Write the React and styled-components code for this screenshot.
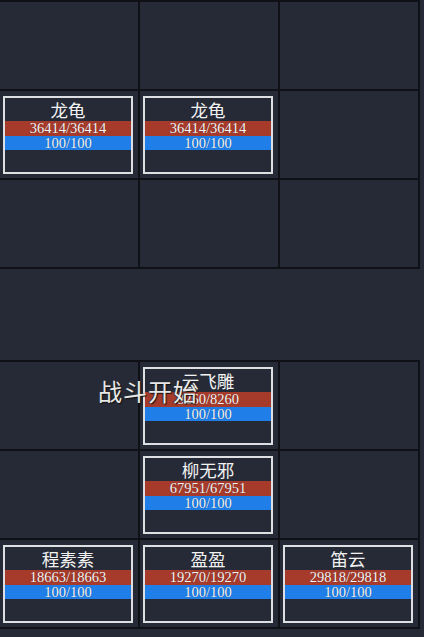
import React from "react"
import styled, { createGlobalStyle } from "styled-components"

const GlobalStyle = createGlobalStyle`
  html, body {
    margin: 0;
    padding: 0;
    background: #262a36;
  }
  body {
    font-family: "Noto Sans CJK SC", "Noto Sans", sans-serif;
  }
`

const Board = styled.div`
  position: relative;
  width: 424px;
  min-height: 637px;
  background: #262a36;
  display: flex;
  flex-direction: column;
`

const Grid = styled.div`
  display: grid;
  grid-template-columns: repeat(3, 138px);
  grid-auto-rows: 87px;
  gap: 2px;
  width: 418px;
  padding: 2px 2px 2px 0;
  background: #0f1117;
`

const Middle = styled.div`
  height: 91px;
`

const Cell = styled.div`
  background: #262a36;
  display: flex;
  align-items: center;
  justify-content: center;
`

const Card = styled.div`
  width: 126px;
  height: 74px;
  margin-right: 2px;
  border: 2px solid #dedfe2;
  background: #262a36;
  display: flex;
  flex-direction: column;
`

const Name = styled.div`
  height: 23px;
  line-height: 23px;
  text-align: center;
  color: #f2f2f2;
  font-size: 17.5px;
  font-family: "Noto Sans CJK SC", sans-serif;
`

const Bar = styled.div`
  height: ${p => p.$h}px;
  line-height: ${p => p.$h}px;
  background: ${p => p.$color};
  color: #f4f4f4;
  text-align: center;
  font-family: "Liberation Serif", serif;
  font-size: 14.5px;
  text-shadow: 0 0 1px rgba(0, 0, 0, 0.4);
`

const Banner = styled.div`
  position: absolute;
  left: 98px;
  top: 373px;
  color: #e8e8e8;
  font-size: 24px;
  letter-spacing: 1px;
  font-family: "Noto Sans CJK SC", sans-serif;
  text-shadow: 1px 1px 1px #111, -1px 0 1px #333;
`

const top = [
  null, null, null,
  { name: "龙龟", hp: "36414/36414" }, { name: "龙龟", hp: "36414/36414" }, null,
  null, null, null,
]

const bottom = [
  null, { name: "云飞雕", hp: "8260/8260" }, null,
  null, { name: "柳无邪", hp: "67951/67951" }, null,
  { name: "程素素", hp: "18663/18663" }, { name: "盈盈", hp: "19270/19270" }, { name: "笛云", hp: "29818/29818" },
]

const Unit = ({ unit }) => (
  <Card>
    <Name>{unit.name}</Name>
    <Bar $h={15} $color="#a63b2c">{unit.hp}</Bar>
    <Bar $h={14} $color="#1f7ee8">100/100</Bar>
  </Card>
)

const Field = ({ cells }) => (
  <Grid>
    {cells.map((u, i) => (
      <Cell key={i}>{u && <Unit unit={u} />}</Cell>
    ))}
  </Grid>
)

export default function App() {
  return (
    <>
      <GlobalStyle />
      <Board>
        <Field cells={top} />
        <Middle />
        <Field cells={bottom} />
        <Banner>战斗开始</Banner>
      </Board>
    </>
  )
}
